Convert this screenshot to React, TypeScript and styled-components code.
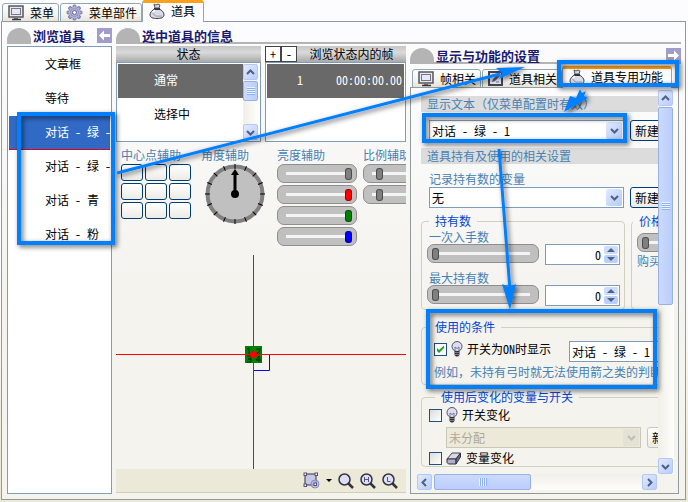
import React, { useState } from "react";
import styled, { createGlobalStyle, css } from "styled-components";

const blue = "#4682b4";
const edge = "#7f9db9";
const frame = "#919b9c";

const GlobalStyle = createGlobalStyle`
  * { box-sizing: border-box; }
  body { margin: 0; background: #ece9d8; }
  body, button, input, select {
    font-family: "Noto Sans CJK SC", "Liberation Sans", sans-serif;
    font-size: 12px;
    line-height: 16px;
    color: #000;
    font-feature-settings: "hwid";
  }
  button, input, select, fieldset, legend { margin: 0; padding: 0; }
`;

/* ---------- window ---------- */

const Page = styled.div`
  position: relative;
  display: flex;
  flex-direction: column;
  height: 100vh;
  min-height: 502px;
  overflow: hidden;
  padding: 0 2px 2px 1px;
  background: linear-gradient(#fcfcfe 0 60%, #ece9d8 90%);
`;

const TabStrip = styled.nav<{ $inset?: boolean }>`
  display: flex;
  align-items: flex-end;
  height: 22px;
  margin-bottom: -1px;
  padding-left: ${(p) => (p.$inset ? 2 : 1)}px;
  flex: none;
`;

const Tab = styled.button<{ $active?: boolean }>`
  display: flex;
  align-items: center;
  gap: 6px;
  height: 19px;
  margin-right: 1px;
  padding: 0 4px 0 5px;
  white-space: nowrap;
  border: 1px solid #91a7b4;
  border-radius: 3px 3px 0 0;
  background: linear-gradient(#fff, #f4f3ee 60%, #e6e4da);
  ${(p) =>
    p.$active &&
    css`
      position: relative;
      height: 22px;
      margin-left: -1px;
      padding: 0 8px 3px 6px;
      border-top: 3px solid #f9a11b;
      border-bottom: 0;
      background: #fcfcfe;
    `}
`;

const Main = styled.main`
  flex: 1;
  min-height: 0;
  display: flex;
  gap: 4px;
  padding: 6px 4px 5px 5px;
  border: 1px solid ${frame};
  background: linear-gradient(#fcfcfe, #f4f3ee 55%);
`;

const Browser = styled.section`
  width: 105px;
  flex: none;
  display: flex;
  flex-direction: column;
`;

const Info = styled.section`
  flex: 1;
  min-width: 0;
  display: flex;
  flex-direction: column;
`;

const Heading = styled.header<{ $line?: boolean }>`
  display: flex;
  align-items: flex-start;
  gap: 2px;
  height: 16px;
  flex: none;
  background: ${(p) =>
    p.$line ? "linear-gradient(#b4b4b4, #b4b4b4) bottom / 100% 2px no-repeat" : "none"};
`;

const Dome = styled.span`
  width: 24px;
  height: 16px;
  flex: none;
  border-radius: 12px 12px 0 0;
  background: #b4b4b4;
`;

const Title = styled.h2`
  flex: none;
  margin: 0;
  font-size: 13px;
  line-height: 15px;
  font-weight: 700;
  color: #191970;
`;

const ArrowButton = styled.button`
  display: grid;
  place-items: center;
  width: 15px;
  height: 15px;
  margin-left: auto;
  border: 0;
  background: #a09dcb;
`;

const ListBox = styled.div`
  display: flex;
  border: 1px solid ${edge};
  background: #fff;
  padding: 1px;
  min-width: 0;
  overflow: hidden;
`;

const Items = styled.ul`
  flex: 1;
  min-width: 0;
  margin: 0;
  padding: 0;
  list-style: none;
  overflow: hidden;
`;

const Item = styled.li<{ $tone?: "blue" | "gray" }>`
  display: flex;
  height: 34px;
  line-height: 32px;
  padding-left: 36px;
  white-space: nowrap;
  overflow: hidden;
  ${(p) =>
    p.$tone === "blue" &&
    css`
      color: #fff;
      background: #316ac5;
      border-bottom: 1px solid #e00020;
    `}
  ${(p) =>
    p.$tone === "gray" &&
    css`
      color: #fff;
      background: #696969;
    `}
`;

const BrowserList = styled(ListBox)`
  flex: 1;
  margin-top: 2px;
`;

const Columns = styled.div`
  flex: 1;
  min-height: 0;
  display: flex;
  gap: 4px;
  padding-top: 2px;
`;

/* ---------- middle column ---------- */

const Middle = styled.div`
  flex: 0 1 290px;
  min-width: 0;
  display: flex;
  flex-direction: column;
  overflow: hidden;
`;

const Lists = styled.div`
  display: grid;
  grid-template-columns: 145px 1fr;
  gap: 4px;
  height: 96px;
  flex: none;
`;

const ListColumn = styled.div`
  display: grid;
  grid-template-rows: 16px 1fr;
  min-width: 0;
`;

const Silver = styled.div`
  display: flex;
  background: linear-gradient(#c6c6c6, #dadada 40%, #a9a9a9);
`;

const SilverText = styled.span`
  flex: 1;
  text-align: center;
  white-space: nowrap;
`;

const SquareButton = styled.button`
  width: 16px;
  height: 16px;
  line-height: 12px;
  border: 1px solid #444;
  background: #fff;
`;

const FrameNumber = styled.span`
  margin-left: -12px;
  width: 12px;
  text-align: right;
`;

const FrameTime = styled.span`
  margin: 0 2px 0 auto;
`;

const ScrollV = styled.div`
  width: 16px;
  flex: none;
  display: flex;
  flex-direction: column;
  justify-content: space-between;
  background: linear-gradient(90deg, #f0efe8, #fefefb);
`;

const ScrollH = styled.div`
  display: flex;
  height: 16px;
  margin-right: 17px;
  justify-content: space-between;
  background: linear-gradient(#f0efe8, #fefefb);
`;

const ScrollButton = styled.button`
  display: grid;
  place-items: center;
  width: 15px;
  height: 16px;
  flex: none;
  border: 1px solid #b4c8f6;
  border-radius: 2px;
  background: linear-gradient(135deg, #e1eafe, #b9cdfb);
`;

const Thumb = styled.div<{ $size: string; $side?: boolean }>`
  display: grid;
  place-items: center;
  border: 1px solid #98b0e4;
  border-radius: 2px;
  background: linear-gradient(${(p) => (p.$side ? "180deg" : "90deg")}, #cbdafd, #bacdfc);
  ${(p) =>
    p.$side
      ? css`
          width: ${p.$size};
          margin: 0 auto 0 2px;
        `
      : css`
          width: 15px;
          height: ${p.$size};
          margin: 1px 0 auto;
        `}
`;

const Grip = styled.i<{ $side?: boolean }>`
  width: 8px;
  height: 8px;
  background: ${(p) =>
    p.$side
      ? "repeating-linear-gradient(90deg, #eef4fe 0 1px, #8cb0f8 1px 2px)"
      : "repeating-linear-gradient(#eef4fe 0 1px, #8cb0f8 1px 2px)"};
`;

const Helpers = styled.div`
  display: grid;
  grid-template-columns: 74px 70px 80px 80px;
  column-gap: 6px;
  height: 113px;
  padding: 6px 0 0 5px;
  flex: none;
`;

const Helper = styled.div`
  display: flex;
  flex-direction: column;
  gap: 2px;
`;

const HelperName = styled.span`
  line-height: 14px;
  color: ${blue};
  white-space: nowrap;
`;

const Caption = styled.label`
  display: block;
  line-height: 15px;
  color: ${blue};
  white-space: nowrap;
`;

const PointGrid = styled.div`
  display: grid;
  grid-template-columns: repeat(3, 22px);
  gap: 2px;
`;

const PointButton = styled.button`
  height: 17px;
  border: 1px solid #003c74;
  border-radius: 3px;
  background: linear-gradient(#fff, #ecebe5);
`;

const Range = styled.input<{ $tone?: string }>`
  appearance: none;
  width: 100%;
  height: 19px;
  padding: 0 8px 0 4px;
  border: 1px solid #8e8e8e;
  border-radius: 7px;
  background: #c0c0c0;
  &::-webkit-slider-runnable-track {
    height: 12px;
    background: linear-gradient(#f4f4f4, #f4f4f4) center / 100% 3px no-repeat;
  }
  &::-webkit-slider-thumb {
    appearance: none;
    width: 7px;
    height: 12px;
    border: 1px solid #0006;
    border-radius: 3px;
    background: ${(p) => p.$tone || "#808080"};
  }
`;

const HelperRange = styled(Range)`
  padding: 0 4px 0 8px;
`;

const Stage = styled.div`
  flex: 1;
  min-height: 0;
  display: flex;
  justify-content: center;
  overflow: hidden;
`;

const Tools = styled.div`
  display: flex;
  align-items: center;
  justify-content: flex-end;
  gap: 6px;
  height: 24px;
  margin-bottom: 1px;
  padding-right: 8px;
  flex: none;
  border-bottom: 1px solid #d0cdbd;
  background: #ece9d8;
`;

const ToolButton = styled.button`
  display: flex;
  align-items: center;
  border: 0;
  background: none;
`;

/* ---------- settings column ---------- */

const Settings = styled.div`
  flex: 1;
  min-width: 0;
  display: flex;
  flex-direction: column;
  padding-top: 2px;
`;

const SettingTabs = styled(TabStrip)`
  height: 24px;
  padding-top: 2px;
`;

const Panel = styled.div`
  flex: 1;
  min-height: 0;
  display: flex;
  flex-direction: column;
  margin-right: 2px;
  padding: 2px 4px 3px 6px;
  border: 1px solid ${frame};
  background: linear-gradient(#fcfcfe, #f4f3ee 55%);
`;

const PanelBody = styled.div`
  flex: 1;
  min-height: 0;
  display: flex;
`;

const Viewport = styled.form`
  flex: 1;
  min-width: 0;
  overflow: hidden;
  padding: 6px 0 0 4px;
`;

const Content = styled.div`
  width: 330px;
  display: flex;
  flex-direction: column;
`;

const Band = styled.h3`
  margin: 0;
  padding-left: 6px;
  font-size: 12px;
  line-height: 16px;
  font-weight: 400;
  font-feature-settings: normal;
  color: ${blue};
  background: #dcdcdc;
`;

const Line = styled.div<{ $left?: number; $top?: number; $gap?: number }>`
  display: flex;
  align-items: flex-start;
  gap: ${(p) => p.$gap ?? 6}px;
  padding-left: ${(p) => p.$left ?? 8}px;
  margin-top: ${(p) => p.$top ?? 0}px;
`;

const ComboBox = styled.span<{ $off?: boolean }>`
  display: flex;
  width: 195px;
  height: 21px;
  flex: none;
  padding: 1px;
  border: 1px solid ${(p) => (p.$off ? "#c9c7ba" : edge)};
  background: ${(p) => (p.$off ? "#ece9d8" : "#fff")};
`;

const Select = styled.select`
  appearance: none;
  flex: 1;
  min-width: 0;
  padding-left: 1px;
  border: 0;
  background: none;
  &:disabled {
    color: #aca899;
    opacity: 1;
  }
`;

const Drop = styled.span<{ $off?: boolean }>`
  display: grid;
  place-items: center;
  width: 16px;
  border-radius: 2px;
  background: ${(p) => (p.$off ? "#e4e2d6" : "linear-gradient(135deg, #e1eafe, #b4c9fb)")};
`;

const NewButton = styled.button<{ $off?: boolean }>`
  width: 48px;
  height: 21px;
  flex: none;
  padding-left: 4px;
  text-align: left;
  border: 1px solid ${(p) => (p.$off ? "#c9c7ba" : "#003c74")};
  border-radius: 3px;
  background: linear-gradient(#fff, #ecebe5);
`;

const Groups = styled.div`
  display: flex;
  gap: 6px;
  margin: 5px 0 9px;
`;

const Group = styled.fieldset<{ $height?: number }>`
  min-width: 0;
  width: ${(p) => (p.$height ? "204px" : "auto")};
  height: ${(p) => (p.$height ? `${p.$height}px` : "auto")};
  flex: none;
  border: 1px solid #d0d0bf;
  border-radius: 4px;
`;

const Legend = styled.legend<{ $left?: number }>`
  margin-left: ${(p) => p.$left ?? 7}px;
  padding: 0 6px;
  color: #0046d5;
`;

const NumberRow = styled.div`
  display: grid;
  grid-template-columns: 112px 75px;
  gap: 6px;
  height: 21px;
  margin: 0 0 5px 5px;
`;

const SpinBox = styled.span`
  display: flex;
  gap: 3px;
  padding: 1px;
  border: 1px solid ${edge};
  background: #fff;
`;

const SpinInput = styled.input`
  flex: 1;
  min-width: 0;
  border: 0;
  text-align: right;
  background: none;
`;

const Check = styled.input`
  appearance: none;
  width: 13px;
  height: 13px;
  flex: none;
  border: 1px solid #1c5180;
  background: linear-gradient(135deg, #dcdcd7, #fff);
  &:checked {
    background: url("data:image/svg+xml,%3Csvg xmlns='http://www.w3.org/2000/svg' viewBox='0 0 11 11'%3E%3Cpath d='M2 4v3l2 2 5-5V1.500L4 6z' fill='%2321a121'/%3E%3C/svg%3E")
      #fff;
  }
`;

const CheckLabel = styled.label<{ $width?: number }>`
  display: flex;
  align-items: center;
  gap: 4px;
  width: ${(p) => (p.$width ? `${p.$width}px` : "auto")};
  flex: none;
  white-space: nowrap;
`;

const Note = styled.p`
  margin: 2px 0 4px 12px;
  color: ${blue};
  white-space: nowrap;
  font-feature-settings: normal;
`;

const Annotations = styled.svg`
  position: absolute;
  top: 0;
  left: 0;
  pointer-events: none;
`;

/* ---------- drawings ---------- */

const Chevron = ({ turn = 0, color = "#4d6185" }: { turn?: number; color?: string }) => (
  <svg width="9" height="9" viewBox="0 0 9 9" aria-hidden>
    <path d="M1 3l3.500 3.500L8 3" fill="none" stroke={color} strokeWidth="2" transform={`rotate(${turn} 4.500 4.500)`} />
  </svg>
);

const SideArrow = ({ right }: { right?: boolean }) => (
  <svg width="11" height="11" viewBox="0 0 11 11" aria-hidden>
    <path d="M0 5.500L5 0.500V4H11V7H5V10.500Z" fill="#fff" transform={right ? "rotate(180 5.500 5.500)" : undefined} />
  </svg>
);

const MonitorIcon = () => (
  <svg width="16" height="16" viewBox="0 0 16 16" aria-hidden>
    <rect x="1" y="1" width="14" height="11" fill="#e8e8ec" stroke="#55555c" strokeWidth="1.500" />
    <rect x="3.500" y="3.500" width="9" height="6" fill="#e6e6ff" stroke="#77777d" />
    <path d="M6 12h4v2H6z" fill="#77777d" />
    <path d="M4 14.500h9" stroke="#333338" strokeWidth="1.500" />
  </svg>
);

const GearIcon = () => (
  <svg width="17" height="17" viewBox="0 0 17 17" aria-hidden>
    {[0, 45, 90, 135].map((a) => (
      <rect key={a} x="7" y="1" width="3" height="15" rx="1" fill="#a5a5d2" stroke="#7a7aa8" transform={`rotate(${a} 8.500 8.500)`} />
    ))}
    <circle cx="8.500" cy="8.500" r="5.500" fill="#b4b4de" />
    <circle cx="8.500" cy="8.500" r="4" fill="none" stroke="#9090c0" />
    <circle cx="8.500" cy="8.500" r="2" fill="#fff" stroke="#62628e" />
  </svg>
);

const BagIcon = () => (
  <svg width="16" height="16" viewBox="0 0 16 16" aria-hidden>
    <path d="M5 1l2 1 2-1 2 1-1 3H6z" fill="#d8d8e2" stroke="#55555f" />
    <path d="M6 6C3 7 1 9.500 1 12c0 2.500 3 3.500 7 3.500s7-1 7-3.500c0-2.500-2-5-5-6z" fill="#dcdce6" stroke="#3c3c48" />
    <path d="M4 10c1 3 5 4 9 3" fill="none" stroke="#b4b4c4" strokeWidth="2" />
    <path d="M5 6h6" stroke="#333340" strokeWidth="2" />
    <path d="M4 9l2-2" stroke="#fff" strokeWidth="1.500" />
  </svg>
);

const EditIcon = () => (
  <svg width="15" height="15" viewBox="0 0 15 15" aria-hidden>
    <rect x="1" y="1" width="13" height="13" fill="#e8e8fa" stroke="#44444e" strokeWidth="2" />
    <path d="M4 11l1-3 6-6 2 2-6 6z" fill="#5a5a78" />
    <path d="M4 4h3M8 11h3" stroke="#7474a0" />
  </svg>
);

const BulbIcon = () => (
  <svg width="12" height="16" viewBox="0 0 12 16" aria-hidden>
    <circle cx="6" cy="5.500" r="5" fill="#dcdcf4" stroke="#55555f" />
    <path d="M4 10V6l2 1.500L8 6v4" fill="none" stroke="#77778c" />
    <path d="M3.500 10h5v4l-1.500 1.500h-2L3.500 14z" fill="#33333d" />
    <path d="M4 11.500h4M4 13.500h4" stroke="#c0c0d0" strokeWidth="0.500" />
  </svg>
);

const EraserIcon = () => (
  <svg width="16" height="13" viewBox="0 0 16 13" aria-hidden>
    <path d="M1 7L6 1h8.500L10 7z" fill="#d8d8ec" stroke="#44444e" />
    <path d="M1 7h9v5H2.500L1 10.500z" fill="#b0b0cc" stroke="#33333d" />
    <path d="M10 7l4.500-6v4L10 12z" fill="#6c6c84" stroke="#33333d" />
  </svg>
);

const LensIcon = ({ mark }: { mark?: "H" | "L" }) => (
  <svg width="16" height="16" viewBox="0 0 16 16" aria-hidden>
    <path d="M10 10l5 5" stroke="#33333d" strokeWidth="2.500" />
    <circle cx="6.500" cy="6.500" r="5.500" fill="#dedef8" stroke="#33333d" strokeWidth="1.500" />
    {mark === "H" && <path d="M4.500 4v5M8.500 4v5M4.500 6.500h4" stroke="#555580" fill="none" />}
    {mark === "L" && <path d="M5.500 4v4.500h3" stroke="#555580" fill="none" />}
  </svg>
);

const ShapeIcon = () => (
  <svg width="17" height="17" viewBox="0 0 17 17" aria-hidden>
    <rect x="2" y="2" width="11" height="11" fill="#c6c6e6" stroke="#33333d" />
    <circle cx="12" cy="12" r="4" fill="#b0b0dcb0" stroke="#8c8cbc" />
    {[[2, 2], [13, 2], [2, 13], [12, 12]].map(([x, y]) => (
      <rect key={`${x}-${y}`} x={x - 1} y={y - 1} width="2.500" height="2.500" fill="#fff" stroke="#50507c" />
    ))}
  </svg>
);

const DialDrawing = styled.svg`
  margin-left: 4px;
`;

const Dial = () => (
  <DialDrawing width="60" height="60" viewBox="0 0 60 60" aria-hidden>
    <circle cx="30" cy="30" r="27.500" fill="#c0c0c0" stroke="#808080" strokeWidth="4" />
    {Array.from({ length: 16 }, (_, i) => (
      <path key={i} d="M30 0v5" stroke="#000" transform={`rotate(${i * 22.5} 30 30)`} />
    ))}
    <circle cx="30" cy="30" r="4" />
    <path d="M28.500 30V11H26l4-6 4 6h-2.500v19z" />
  </DialDrawing>
);

const Crosshair = () => (
  <svg width="290" height="215" viewBox="0 0 290 215" aria-hidden>
    <rect x="129" y="91" width="17" height="17" fill="#008000" />
    <g stroke="#003000" fill="none">
      <path d="M131 94l2-1v6M140 94h4v2l-4 3h4M131 101h4v3h-3 3v3h-4M143 107v-6l-3 4h5" />
    </g>
    <path d="M153.500 100v15.500H138" fill="none" stroke="#0000ff" />
    <path d="M0 99.500H290M137.500 0V215" stroke="#ff0000" />
    <circle cx="137.500" cy="99.500" r="3.500" fill="#ff0000" />
  </svg>
);

const Spinner = () => (
  <svg width="14" height="17" viewBox="0 0 14 17" aria-hidden>
    <rect width="14" height="8" rx="2" fill="#cddcfd" />
    <rect y="9" width="14" height="8" rx="2" fill="#bccffb" />
    <path d="M3 6l4-4 4 4zM3 11l4 4 4-4z" fill="#4d6185" />
  </svg>
);

const Callouts = () => (
  <Annotations width="688" height="502" viewBox="0 0 688 502" aria-hidden>
    <defs>
      <filter id="shade" x="-10%" y="-10%" width="120%" height="120%">
        <feDropShadow dx="2" dy="2" stdDeviation="2.500" floodColor="#000" floodOpacity="0.600" />
      </filter>
    </defs>
    <g filter="url(#shade)">
      <g fill="none" stroke="#0080ff" strokeWidth="4">
        <rect x="19" y="114" width="94" height="129" />
        <rect x="559" y="62" width="118" height="23" />
        <rect x="424" y="115" width="201" height="26" />
        <rect x="428" y="311" width="227" height="76" />
      </g>
      <g stroke="#0080ff" strokeWidth="3">
        <path d="M117 173L500 74M499 149L510 290" />
      </g>
      <g fill="#0080ff">
        <path d="M525 67L496 68L502 73L499 79Z" />
        <path d="M564 112L570 96L576 98L580 89L582 93L586 91L584 96L588 98Z" />
        <path d="M510 310L502 284L509 287L516 284Z" />
      </g>
    </g>
  </Annotations>
);

/* ---------- controls ---------- */

const VerticalScroll = ({ thumb }: { thumb: string }) => (
  <ScrollV>
    <ScrollButton type="button" aria-label="向上"><Chevron turn={180} /></ScrollButton>
    <Thumb $size={thumb}><Grip /></Thumb>
    <ScrollButton type="button" aria-label="向下"><Chevron /></ScrollButton>
  </ScrollV>
);

const Combo = ({ label, value, off }: { label: string; value: string; off?: boolean }) => (
  <ComboBox $off={off}>
    <Select aria-label={label} disabled={off} defaultValue={value}>
      <option>{value}</option>
    </Select>
    <Drop $off={off}><Chevron color={off ? "#c0beb2" : undefined} /></Drop>
  </ComboBox>
);

const AmountCaption = styled(Caption)`
  padding-left: 7px;
`;

const Amount = ({ id, label }: { id: string; label: string }) => {
  const [value, setValue] = useState(0);
  return (
    <>
      <AmountCaption htmlFor={id}>{label}</AmountCaption>
      <NumberRow>
        <Range type="range" aria-label={label} value={value} onChange={(e) => setValue(+e.target.value)} />
        <SpinBox>
          <SpinInput id={id} value={value} onChange={(e) => setValue(+e.target.value || 0)} />
          <Spinner />
        </SpinBox>
      </NumberRow>
    </>
  );
};

const Price = styled.div`
  display: grid;
  gap: 1px;
  padding: 4px 8px 0 5px;
`;

const UsageGroup = styled(Group)`
  margin-top: 4px;
`;

const OwnedBand = styled(Band)`
  margin-top: 7px;
`;

const entries = ["文章框", "等待", "对话 - 绿 - 1", "对话 - 绿 - 2", "对话 - 青", "对话 - 粉"];
const levels = [
  ["亮度", "#808080"],
  ["红", "#ff0000"],
  ["绿", "#008000"],
  ["蓝", "#0000ff"],
];

export default function App() {
  return (
    <Page>
      <GlobalStyle />
      <TabStrip>
        <Tab><MonitorIcon />菜单</Tab>
        <Tab><GearIcon />菜单部件</Tab>
        <Tab $active><BagIcon />道具</Tab>
      </TabStrip>
      <Main>
        <Browser>
          <Heading>
            <Dome />
            <Title>浏览道具</Title>
            <ArrowButton aria-label="收起"><SideArrow /></ArrowButton>
          </Heading>
          <BrowserList>
            <Items>
              {entries.map((name, i) => (
                <Item key={name} $tone={i === 2 ? "blue" : undefined}>{name}</Item>
              ))}
            </Items>
          </BrowserList>
        </Browser>
        <Info>
          <Heading $line>
            <Dome />
            <Title>选中道具的信息</Title>
          </Heading>
          <Columns>
            <Middle>
              <Lists>
                <ListColumn>
                  <Silver><SilverText>状态</SilverText></Silver>
                  <ListBox>
                    <Items>
                      <Item $tone="gray">通常</Item>
                      <Item>选择中</Item>
                    </Items>
                    <VerticalScroll thumb="20px" />
                  </ListBox>
                </ListColumn>
                <ListColumn>
                  <Silver>
                    <SquareButton>+</SquareButton>
                    <SquareButton>-</SquareButton>
                    <SilverText>浏览状态内的帧</SilverText>
                  </Silver>
                  <ListBox>
                    <Items>
                      <Item $tone="gray">
                        <FrameNumber>1</FrameNumber>
                        <FrameTime>00:00:00.00</FrameTime>
                      </Item>
                    </Items>
                  </ListBox>
                </ListColumn>
              </Lists>
              <Helpers>
                <Helper>
                  <HelperName>中心点辅助</HelperName>
                  <PointGrid>
                    {Array.from({ length: 9 }, (_, i) => (
                      <PointButton key={i} aria-label={`中心点 ${i + 1}`} />
                    ))}
                  </PointGrid>
                </Helper>
                <Helper>
                  <HelperName>角度辅助</HelperName>
                  <Dial />
                </Helper>
                <Helper>
                  <HelperName>亮度辅助</HelperName>
                  {levels.map(([name, tone]) => (
                    <HelperRange key={name} type="range" aria-label={name} defaultValue={100} $tone={tone} />
                  ))}
                </Helper>
                <Helper>
                  <HelperName>比例辅助</HelperName>
                  <HelperRange type="range" aria-label="横向比例" defaultValue={6} />
                  <HelperRange type="range" aria-label="纵向比例" defaultValue={6} />
                </Helper>
              </Helpers>
              <Stage><Crosshair /></Stage>
              <Tools>
                <ToolButton aria-label="形状"><ShapeIcon /></ToolButton>
                <ToolButton aria-label="更多">
                  <svg width="6" height="4" viewBox="0 0 6 4" aria-hidden><path d="M0 0h6L3 3z" /></svg>
                </ToolButton>
                <ToolButton aria-label="缩放"><LensIcon /></ToolButton>
                <ToolButton aria-label="放大"><LensIcon mark="H" /></ToolButton>
                <ToolButton aria-label="缩小"><LensIcon mark="L" /></ToolButton>
              </Tools>
            </Middle>
            <Settings>
              <Heading $line>
                <Dome />
                <Title>显示与功能的设置</Title>
                <ArrowButton aria-label="展开"><SideArrow right /></ArrowButton>
              </Heading>
              <SettingTabs $inset>
                <Tab><MonitorIcon />帧相关</Tab>
                <Tab><EditIcon />道具相关</Tab>
                <Tab $active><BagIcon />道具专用功能</Tab>
              </SettingTabs>
              <Panel>
                <PanelBody>
                  <Viewport>
                    <Content>
                      <Band>显示文本（仅菜单配置时有效）</Band>
                      <Line $top={8}>
                        <Combo label="显示文本" value="对话 - 绿 - 1" />
                        <NewButton type="button">新建</NewButton>
                      </Line>
                      <OwnedBand>道具持有及使用的相关设置</OwnedBand>
                      <Line $top={7}><Caption as="span">记录持有数的变量</Caption></Line>
                      <Line $top={1}>
                        <Combo label="记录持有数的变量" value="无" />
                        <NewButton type="button">新建</NewButton>
                      </Line>
                      <Groups>
                        <Group $height={97}>
                          <Legend>持有数</Legend>
                          <Amount id="once" label="一次入手数" />
                          <Amount id="most" label="最大持有数" />
                        </Group>
                        <Group $height={97}>
                          <Legend $left={1}>价格</Legend>
                          <Price>
                            <Range type="range" aria-label="价格" defaultValue={0} />
                            <Caption as="span">购买</Caption>
                          </Price>
                        </Group>
                      </Groups>
                      <Group>
                        <Legend>使用的条件</Legend>
                        <Line $left={12} $top={6} $gap={0}>
                          <CheckLabel $width={135}>
                            <Check type="checkbox" defaultChecked />
                            <BulbIcon />开关为ON时显示
                          </CheckLabel>
                          <Combo label="条件开关" value="对话 - 绿 - 1" />
                        </Line>
                        <Note>例如，未持有弓时就无法使用箭之类的判断</Note>
                      </Group>
                      <UsageGroup>
                        <Legend $left={13}>使用后变化的变量与开关</Legend>
                        <Line $left={7} $top={2}>
                          <CheckLabel><Check type="checkbox" /><BulbIcon />开关变化</CheckLabel>
                        </Line>
                        <Line $left={24} $top={4}>
                          <Combo label="开关变化" value="未分配" off />
                          <NewButton type="button" $off>新建</NewButton>
                        </Line>
                        <Line $left={7} $top={2}>
                          <CheckLabel><Check type="checkbox" /><EraserIcon />变量变化</CheckLabel>
                        </Line>
                      </UsageGroup>
                    </Content>
                  </Viewport>
                  <VerticalScroll thumb="198px" />
                </PanelBody>
                <ScrollH>
                  <ScrollButton type="button" aria-label="向左"><Chevron turn={90} /></ScrollButton>
                  <Thumb $side $size="97px"><Grip $side /></Thumb>
                  <ScrollButton type="button" aria-label="向右"><Chevron turn={-90} /></ScrollButton>
                </ScrollH>
              </Panel>
            </Settings>
          </Columns>
        </Info>
      </Main>
      <Callouts />
    </Page>
  );
}
